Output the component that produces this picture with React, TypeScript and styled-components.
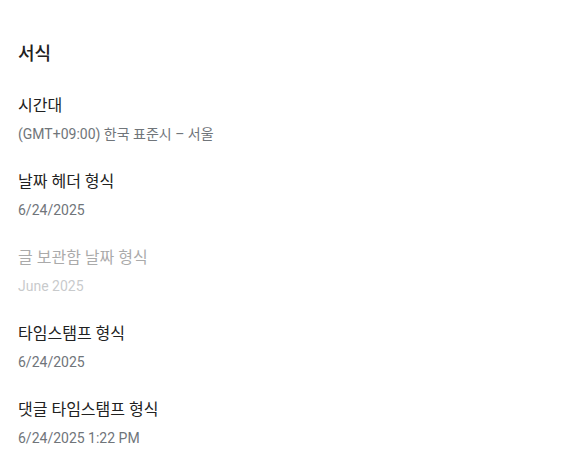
import * as React from "react";
import styled, { createGlobalStyle } from "styled-components";

type Setting = {
  label: string;
  value: string;
  disabled?: boolean;
};

const settings: Setting[] = [
  { label: "시간대", value: "(GMT+09:00) 한국 표준시 – 서울" },
  { label: "날짜 헤더 형식", value: "6/24/2025" },
  { label: "글 보관함 날짜 형식", value: "June 2025", disabled: true },
  { label: "타임스탬프 형식", value: "6/24/2025" },
  { label: "댓글 타임스탬프 형식", value: "6/24/2025 1:22 PM" },
];

export default function App() {
  return (
    <>
      <GlobalStyle />
      <Section>
        <Title>서식</Title>
        <List>
          {settings.map((item) => (
            <Item key={item.label} $disabled={item.disabled}>
              <Label>{item.label}</Label>
              <Value>{item.value}</Value>
            </Item>
          ))}
        </List>
      </Section>
    </>
  );
}

const GlobalStyle = createGlobalStyle`
  html, body {
    margin: 0;
    background: #ffffff;
  }

  body {
    font-family: Roboto, "Noto Sans CJK KR", sans-serif;
  }
`;

const Section = styled.section`
  padding: 42px 18px 0;
`;

const Title = styled.h2`
  margin: 0;
  font-size: 18px;
  line-height: 24px;
  font-weight: 500;
  color: #212121;
`;

const List = styled.div`
  display: flex;
  flex-direction: column;
  gap: 27px;
  margin-top: 29px;
`;

const Item = styled.div<{ $disabled?: boolean }>`
  display: flex;
  flex-direction: column;
  gap: 7px;
  opacity: ${(p) => (p.$disabled ? 0.38 : 1)};
`;

const Label = styled.div`
  font-size: 16px;
  line-height: 22px;
  color: #212121;
`;

const Value = styled.div`
  font-size: 14px;
  line-height: 20px;
  color: #70757a;
`;
